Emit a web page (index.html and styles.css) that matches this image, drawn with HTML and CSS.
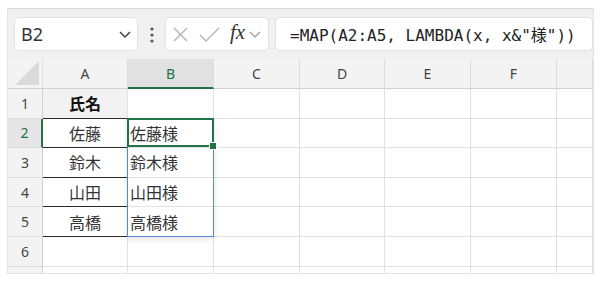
FILE: index.html
```html
<!DOCTYPE html>
<html>
  <head>
    <title>MAP LAMBDA</title>
    <link rel="stylesheet" href="styles.css">
  </head>
  <body>
    <div class="frame">
      <div class="toolbar">
        <div class="namebox">
          <span>B2</span>
          <svg class="chev" width="12" height="7" viewBox="0 0 12 7"><polyline points="1,1 6,6 11,1" /></svg>
        </div>
        <svg class="dots" width="4" height="16" viewBox="0 0 4 16">
          <circle cx="2" cy="2" r="1.6" />
          <circle cx="2" cy="8" r="1.6" />
          <circle cx="2" cy="14" r="1.6" />
        </svg>
        <div class="fxbox">
          <svg class="icon" width="15" height="15" viewBox="0 0 15 15">
            <line x1="1" y1="1" x2="14" y2="14" />
            <line x1="14" y1="1" x2="1" y2="14" />
          </svg>
          <svg class="icon" width="21" height="15" viewBox="0 0 21 15">
            <polyline points="1,8 7,14 20,1" />
          </svg>
          <span class="fx">fx</span>
          <svg class="chev small" width="12" height="7" viewBox="0 0 12 7"><polyline points="1,1 6,6 11,1" /></svg>
        </div>
        <div class="formula">=MAP(A2:A5, LAMBDA(x, x&amp;"様"))</div>
      </div>

      <div class="sheet">
        <!-- header row -->
        <div class="corner">
          <svg width="24" height="24" viewBox="0 0 24 24"><polygon points="24,0 24,24 0,24" /></svg>
        </div>
        <div class="colhead">A</div>
        <div class="colhead active">B</div>
        <div class="colhead">C</div>
        <div class="colhead">D</div>
        <div class="colhead">E</div>
        <div class="colhead">F</div>
        <div class="colhead"></div>

        <div class="rowhead">1</div>
        <div class="cell name title">氏名</div>
        <div class="cell"></div>
        <div class="cell"></div><div class="cell"></div><div class="cell"></div><div class="cell"></div><div class="cell"></div>

        <div class="rowhead active">2</div>
        <div class="cell name">佐藤</div>
        <div class="cell out current">
          佐藤様
          <!-- spill range B2:B5 and active cell B2 -->
          <div class="spill"></div>
          <div class="activecell"><span class="handle"></span></div>
        </div>
        <div class="cell"></div><div class="cell"></div><div class="cell"></div><div class="cell"></div><div class="cell"></div>

        <div class="rowhead">3</div>
        <div class="cell name">鈴木</div>
        <div class="cell out">鈴木様</div>
        <div class="cell"></div><div class="cell"></div><div class="cell"></div><div class="cell"></div><div class="cell"></div>

        <div class="rowhead">4</div>
        <div class="cell name">山田</div>
        <div class="cell out">山田様</div>
        <div class="cell"></div><div class="cell"></div><div class="cell"></div><div class="cell"></div><div class="cell"></div>

        <div class="rowhead">5</div>
        <div class="cell name">高橋</div>
        <div class="cell out">高橋様</div>
        <div class="cell"></div><div class="cell"></div><div class="cell"></div><div class="cell"></div><div class="cell"></div>

        <div class="rowhead">6</div>
        <div class="cell"></div><div class="cell"></div><div class="cell"></div><div class="cell"></div><div class="cell"></div><div class="cell"></div><div class="cell"></div>

        <div class="rowhead"></div>
        <div class="cell"></div><div class="cell"></div><div class="cell"></div><div class="cell"></div><div class="cell"></div><div class="cell"></div><div class="cell"></div>
      </div>
    </div>
  </body>
</html>
```

FILE: styles.css
```css
body {
  margin: 0;
  background: #ffffff;
  font-family: "Noto Sans", "Noto Sans CJK JP", sans-serif;
  color: #222;
}

.frame {
  margin: 8px 0 0 7px;
  width: 587px;
  height: 266px;
  border: 1px solid #e4e4e4;
  border-top-color: #d9d9d9;
  box-sizing: border-box;
  overflow: hidden;
}

/* toolbar */
.toolbar {
  height: 50px;
  background: #f0f0f0;
  display: flex;
  align-items: flex-start;
  padding: 8px 0 0 6px;
  box-sizing: border-box;
}
.namebox,
.fxbox,
.formula {
  height: 34px;
  background: #ffffff;
  border: 1px solid #e2e2e2;
  border-radius: 5px;
  box-sizing: border-box;
  display: flex;
  align-items: center;
}
.namebox {
  width: 124px;
  padding: 0 6px 0 6px;
  justify-content: space-between;
  font-size: 18px;
  color: #333;
}
.chev polyline {
  fill: none;
  stroke: #444;
  stroke-width: 1.5;
}
.chev.small polyline {
  stroke: #999;
  stroke-width: 1.2;
}
.dots {
  margin: 10px 11px 0 12px;
  fill: #555;
}
.fxbox {
  width: 104px;
  padding-left: 7px;
}
.icon line,
.icon polyline {
  fill: none;
  stroke: #b5b5b5;
  stroke-width: 1.4;
}
.fxbox .icon + .icon {
  margin-left: 11px;
}
.fx {
  font-family: "Liberation Serif", "DejaVu Serif", serif;
  font-style: italic;
  font-size: 21px;
  color: #333;
  margin: -3px 4px 0 10px;
}
.formula {
  flex: 1;
  margin-left: 6px;
  padding-left: 14px;
  font-family: "DejaVu Sans Mono", "Noto Sans CJK JP", monospace;
  font-size: 16px;
  color: #222;
  white-space: nowrap;
}

/* sheet grid */
.sheet {
  display: grid;
  grid-template-columns: 35px 85px 86px 86px 85px 86px 86px 1fr;
  grid-template-rows: 30px repeat(6, 29.6px) 1fr;
  height: 215px;
  background: #ffffff;
}
.corner,
.colhead,
.rowhead,
.cell {
  box-sizing: border-box;
  border-right: 1px solid #e1e1e1;
  border-bottom: 1px solid #e1e1e1;
  display: flex;
  align-items: center;
}
.corner {
  background: #f3f3f3;
  justify-content: flex-end;
  align-items: flex-end;
  padding: 0 3px 3px 0;
  border-bottom-color: #d0d0d0;
}
.corner svg {
  fill: #dadada;
}
.colhead {
  background: #f3f3f3;
  justify-content: center;
  font-size: 14px;
  color: #444;
  border-right-color: #dcdcdc;
  border-bottom-color: #d0d0d0;
}
.colhead.active {
  background: #e1e1e1;
  color: #1e7145;
  border-bottom: 2px solid #217346;
}
.rowhead {
  background: #f3f3f3;
  justify-content: center;
  font-size: 14px;
  color: #444;
  border-right-color: #d0d0d0;
  border-bottom-color: #dcdcdc;
}
.rowhead.active {
  background: #e6e6e6;
  color: #1e7145;
  border-right: 2px solid #217346;
}
.cell {
  font-family: "Noto Sans CJK JP", sans-serif;
  font-size: 16px;
  color: #333;
}
.cell.name {
  justify-content: center;
  border-bottom: 1px solid #2b2b2b;
}
.cell.title {
  background: #f2f2f2;
  font-weight: bold;
  color: #111;
}
.cell.out {
  padding-left: 2px;
}
.cell.current {
  position: relative;
  z-index: 1;
}

/* overlays on B2 */
.spill {
  position: absolute;
  left: -1px;
  right: -1px;
  top: -1px;
  height: 119.4px;
  border: 1px solid #5b88d6;
  box-shadow: 0 2px 6px rgba(0, 0, 0, 0.12);
  box-sizing: border-box;
}
.activecell {
  position: absolute;
  left: -1px;
  right: -1px;
  top: -1px;
  bottom: 0;
  border: 2px solid #217346;
}
.handle {
  position: absolute;
  right: -5px;
  bottom: -5px;
  width: 6px;
  height: 6px;
  background: #217346;
  border: 1px solid #ffffff;
}
```
